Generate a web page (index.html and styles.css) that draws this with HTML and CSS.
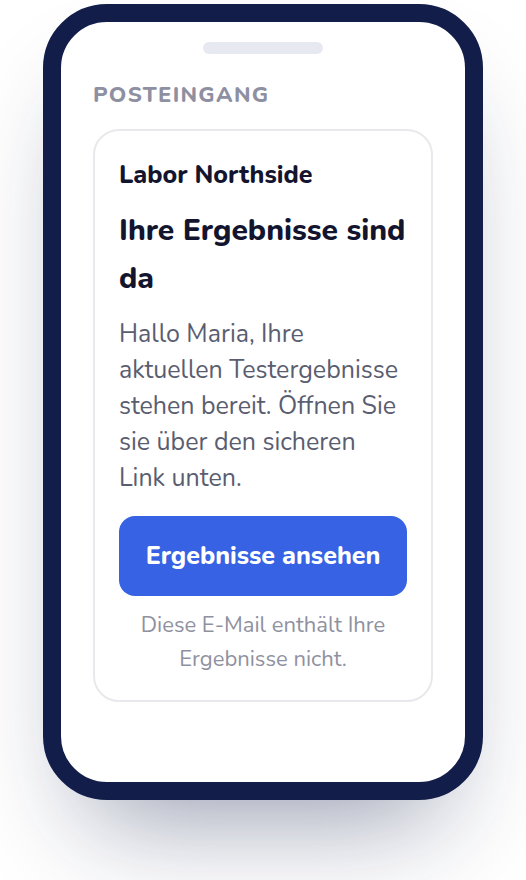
FILE: index.html
```html
<!DOCTYPE html>
<html lang="de">
<head>
<meta charset="utf-8">
<meta name="viewport" content="width=device-width, initial-scale=1">
<title>Posteingang</title>
<link rel="stylesheet" href="styles.css">
</head>
<body>
<main class="phone">
  <div class="speaker"></div>
  <h1 class="inbox-title">Posteingang</h1>
  <article class="mail">
    <p class="sender">Labor Northside</p>
    <h2 class="subject">Ihre Ergebnisse sind da</h2>
    <p class="message">Hallo Maria, Ihre aktuellen Testergebnisse stehen bereit. Öffnen Sie sie über den sicheren Link unten.</p>
    <button class="action" type="button">Ergebnisse ansehen</button>
    <p class="note">Diese E-Mail enthält Ihre Ergebnisse nicht.</p>
  </article>
</main>
</body>
</html>
```
FILE: styles.css
```css
* {
  box-sizing: border-box;
}

body {
  margin: 0;
  padding: 4px 43px 80px;
  background: #fff;
  font-family: Nunito, Lato, sans-serif;
  color: #13152f;
}

h1,
h2,
p {
  margin: 0;
}

.phone {
  max-width: 440px;
  margin: 0 auto;
  padding: 20px 32px 80px;
  border: 18px solid #121d49;
  border-radius: 64px;
  background: #fff;
  box-shadow: 0 60px 108px -44px rgba(18, 29, 73, 0.45);
}

.speaker {
  width: 120px;
  height: 12px;
  margin: 0 auto 24px;
  border-radius: 6px;
  background: #e6e9ef;
}

.inbox-title {
  margin-bottom: 16px;
  font-size: 22px;
  font-weight: 800;
  line-height: 35px;
  letter-spacing: 0.06em;
  text-transform: uppercase;
  color: #8e90a2;
}

.mail {
  padding: 24px;
  border: 2px solid #e8e9ec;
  border-radius: 26px;
}

.sender {
  margin-bottom: 12px;
  font-size: 25px;
  font-weight: 800;
  line-height: 40px;
}

.subject {
  margin-bottom: 13px;
  font-size: 30px;
  font-weight: 800;
  line-height: 48px;
}

.message {
  margin-bottom: 20px;
  font-size: 25px;
  line-height: 36px;
  color: #5a5d70;
}

.action {
  display: block;
  width: 100%;
  margin-bottom: 12px;
  padding: 20px 16px;
  border: 0;
  border-radius: 16px;
  background: #3662e3;
  font: inherit;
  font-size: 25px;
  font-weight: 800;
  line-height: 40px;
  color: #fff;
  cursor: pointer;
}

.note {
  font-size: 22px;
  line-height: 34px;
  text-align: center;
  color: #8f919f;
}
```
